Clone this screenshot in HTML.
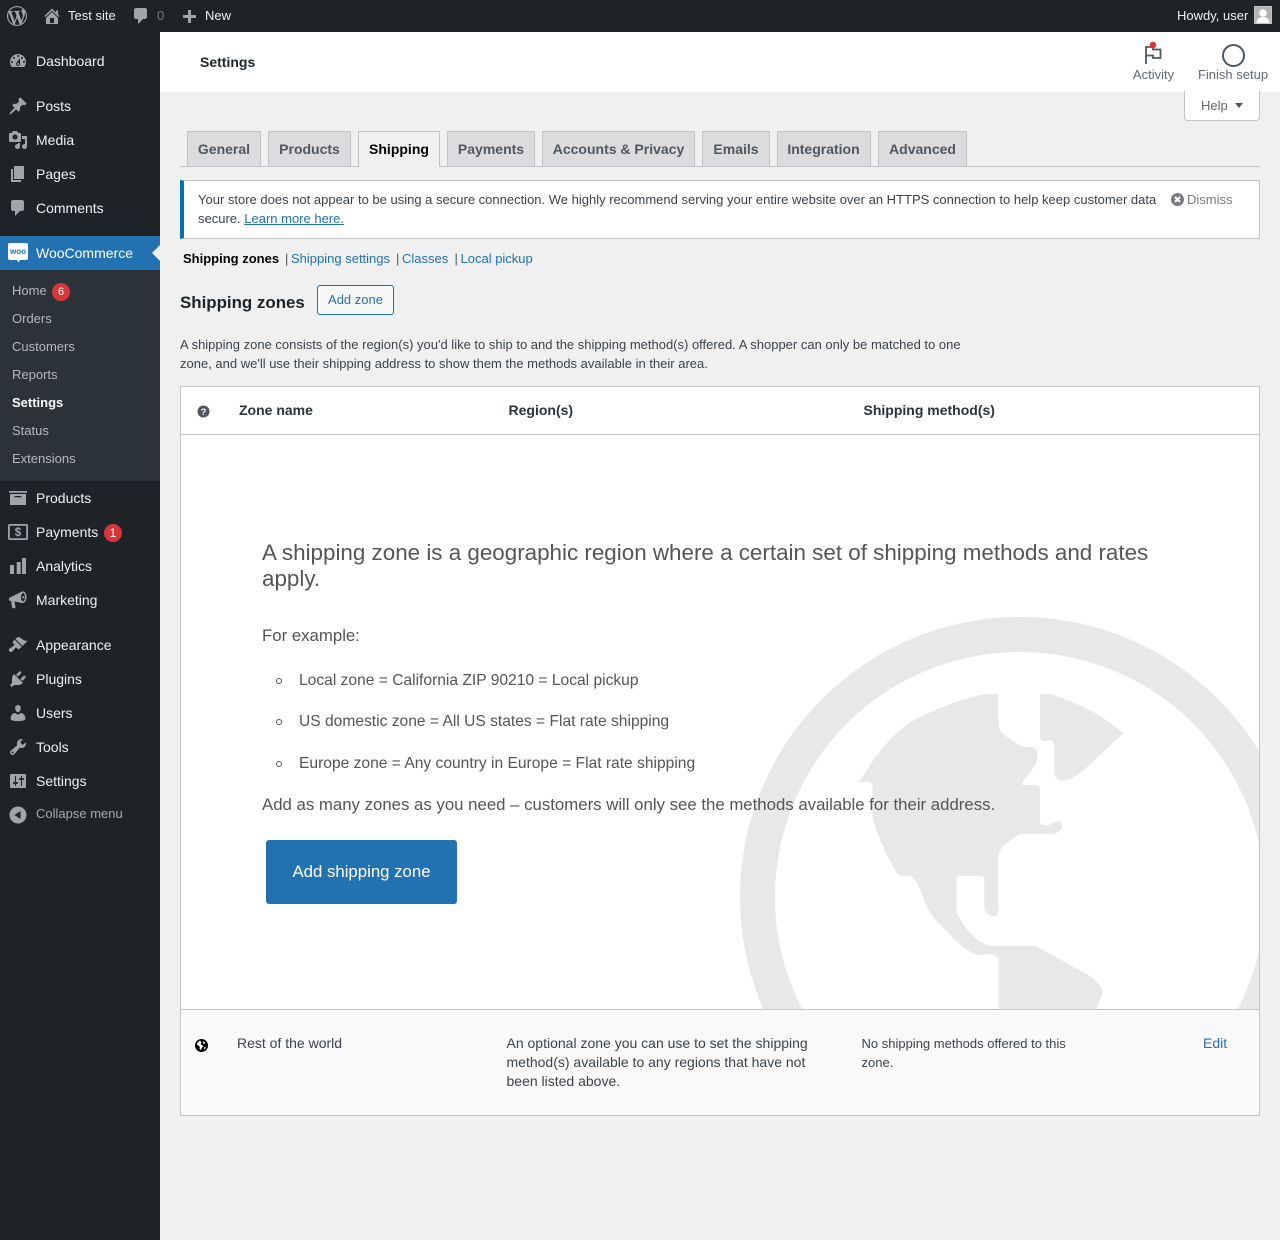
<!DOCTYPE html>
<html lang="en"><head><meta charset="utf-8"><title>Shipping settings</title>
<style>
html,body{margin:0;padding:0}
body{width:1280px;height:1240px;position:relative;overflow:hidden;background:#f0f0f1;font-family:"Liberation Sans",sans-serif;font-size:13px;color:#3c434a}
.a,.t,svg.i{position:absolute}
.t{white-space:nowrap;line-height:20px}
a{color:#2271b1;text-decoration:none}
.m{left:36px;font-size:14px;color:#f0f0f1}
.s{left:12px;font-size:13px;color:#b4b9be}
svg.i{width:20px;height:20px;fill:#a0a5aa;left:8px}
.tab{position:absolute;top:131px;height:34px;box-sizing:content-box;background:#dcdcde;border:1px solid #c3c4c7;border-bottom:0;font-size:14px;font-weight:bold;line-height:35px;color:#50575e;text-align:center}
.badge{position:absolute;width:18px;height:18px;border-radius:50%;background:#d63638;color:#fff;font-size:11px;line-height:18px;text-align:center}
.b{font-size:15.6px;color:#555}
</style></head><body>

<div class="a" style="left:0;top:0;width:1280px;height:32px;background:#1d2327"></div>
<div class="a" style="left:0;top:32px;width:160px;height:1208px;background:#1d2327"></div>

<svg class="i" style="left:7px;top:6px" viewBox="0 0 20 20"><path d="M20 10c0-5.51-4.49-10-10-10C4.48 0 0 4.49 0 10c0 5.52 4.48 10 10 10 5.51 0 10-4.48 10-10zM7.78 15.37L4.37 6.22c.55-.02 1.17-.08 1.17-.08.5-.06.44-1.13-.06-1.11 0 0-1.45.11-2.37.11-.18 0-.37 0-.58-.01C4.12 2.69 6.87 1.11 10 1.11c2.33 0 4.45.87 6.05 2.34-.68-.11-1.65.39-1.65 1.58 0 .74.45 1.36.9 2.1.35.61.55 1.36.55 2.46 0 1.49-1.4 5-1.4 5l-3.03-8.37c.54-.02.82-.17.82-.17.5-.05.44-1.25-.06-1.22 0 0-1.44.12-2.38.12-.87 0-2.33-.12-2.33-.12-.5-.03-.56 1.2-.06 1.22l.92.08 1.26 3.41zM17.41 10c.24-.64.74-1.87.43-4.25.7 1.29 1.05 2.71 1.05 4.25 0 3.29-1.73 6.24-4.4 7.78.97-2.59 1.94-5.2 2.92-7.78zM6.1 18.09C3.12 16.65 1.11 13.53 1.11 10c0-1.3.23-2.48.72-3.59C3.25 10.3 4.67 14.2 6.1 18.09zm4.03-6.63l2.58 6.98c-.86.29-1.76.45-2.71.45-.79 0-1.57-.11-2.29-.33.81-2.38 1.62-4.74 2.42-7.1z"/></svg>
<svg class="i" style="left:42px;top:6px" viewBox="0 0 20 20"><path d="M16 8.5l1.53 1.53-1.06 1.06L10 4.62l-6.47 6.47-1.06-1.06L10 2.5l4 4v-2h2v4zm-6-2.46l6 5.99V18H4v-5.97zM12 17v-5H8v5h4z"/></svg>
<div class="t" style="left:68px;top:6px;color:#f0f0f1">Test site</div>
<svg class="i" style="left:131px;top:6px" viewBox="0 0 20 20"><path d="M5 2h9c1.1 0 2 .9 2 2v7c0 1.1-.9 2-2 2h-2l-5 5v-5H5c-1.1 0-2-.9-2-2V4c0-1.1.9-2 2-2z"/></svg>
<div class="t" style="left:157px;top:6px;color:#787c82">0</div>
<svg class="i" style="left:179px;top:7px" viewBox="0 0 20 20"><path d="M17 8H12V3H9V8H4V11H9V16H12V11H17Z"/></svg>
<div class="t" style="left:205px;top:6px;color:#f0f0f1">New</div>
<div class="t" style="left:1177px;top:6px;color:#f0f0f1">Howdy, user</div>
<svg class="a" style="left:1254px;top:6px" width="18" height="18" viewBox="0 0 18 18"><rect width="18" height="18" fill="#c3c4c7"/><rect x="1" y="1" width="16" height="16" fill="#b4b4b4"/><circle cx="9" cy="7" r="3.800" fill="#fff"/><path d="M2.500 17c0-4 3-6 6.500-6s6.500 2 6.500 6z" fill="#fff"/></svg>

<svg class="i" style="top:51px" viewBox="0 0 20 20"><path d="M3.760 16h12.480c1.100-1.370 1.760-3.110 1.760-5 0-4.420-3.580-8-8-8s-8 3.580-8 8c0 1.890.66 3.630 1.760 5zM10 4c.55 0 1 .45 1 1s-.45 1-1 1-1-.45-1-1 .45-1 1-1zM6 6c.55 0 1 .45 1 1s-.45 1-1 1-1-.45-1-1 .45-1 1-1zm8 0c.55 0 1 .45 1 1s-.45 1-1 1-1-.45-1-1 .45-1 1-1zm-5.370 5.550L12 7v6c0 1.100-.9 2-2 2s-2-.9-2-2c0-.57.24-1.080.63-1.450zM4 10c.55 0 1 .45 1 1s-.45 1-1 1-1-.45-1-1 .45-1 1-1zm12 0c.55 0 1 .45 1 1s-.45 1-1 1-1-.45-1-1 .45-1 1-1zm-5 3c0-.55-.45-1-1-1s-1 .45-1 1 .45 1 1 1 1-.45 1-1z"/></svg>
<div class="t m" style="top:51px">Dashboard</div>
<svg class="i" style="top:96px" viewBox="0 0 20 20"><path d="M10.440 3.020l1.820-1.820 6.360 6.350-1.830 1.820c-1.050-.68-2.480-.57-3.410.36l-.75.75c-.92.93-1.040 2.350-.35 3.410l-1.830 1.820-2.410-2.410-2.800 2.790c-.42.42-3.380 2.710-3.800 2.290s1.860-3.390 2.280-3.810l2.790-2.790L4.100 9.360l1.830-1.820c1.050.69 2.480.57 3.400-.36l.75-.75c.93-.92 1.050-2.350.36-3.410z"/></svg>
<div class="t m" style="top:96px">Posts</div>
<svg class="i" style="top:130px" viewBox="0 0 20 20"><path d="M13 11V4c0-.55-.45-1-1-1h-1.670L9 1H5L3.670 3H2c-.55 0-1 .45-1 1v7c0 .55.45 1 1 1h10c.55 0 1-.45 1-1zM7 4.500c1.380 0 2.500 1.120 2.500 2.500S8.380 9.500 7 9.500 4.500 8.380 4.500 7 5.620 4.500 7 4.500zM14 6h5v10.500c0 1.380-1.120 2.500-2.500 2.500S14 17.880 14 16.500s1.120-2.500 2.500-2.500c.17 0 .34.02.5.05V9h-3V6zm-4 8.050V13h2v3.500c0 1.380-1.120 2.500-2.500 2.500S7 17.880 7 16.500 8.120 14 9.500 14c.17 0 .34.02.5.05z"/></svg>
<div class="t m" style="top:130px">Media</div>
<svg class="i" style="top:164px" viewBox="0 0 20 20"><path d="M6 15V2h10v13H6zm-1 1h8v2H3V5h2v11z"/></svg>
<div class="t m" style="top:164px">Pages</div>
<svg class="i" style="top:198px" viewBox="0 0 20 20"><path d="M5 2h9c1.100 0 2 .9 2 2v7c0 1.100-.9 2-2 2h-2l-5 5v-5H5c-1.100 0-2-.9-2-2V4c0-1.100.9-2 2-2z"/></svg>
<div class="t m" style="top:198px">Comments</div>

<div class="a" style="left:0;top:236px;width:160px;height:34px;background:#2271b1"></div>
<div class="a" style="left:152px;top:245px;width:0;height:0;border:8px solid transparent;border-left:0;border-right-color:#f0f0f1"></div>
<svg class="a" style="left:8px;top:243px" width="20" height="20" viewBox="0 0 20 20"><path d="M2 0h16a2 2 0 0 1 2 2v13a2 2 0 0 1-2 2h-6l-1.500 2.500-1.500-2.500H2a2 2 0 0 1-2-2V2a2 2 0 0 1 2-2z" fill="#fff"/><text x="10" y="11" text-anchor="middle" font-family="Liberation Sans,sans-serif" font-size="8" font-weight="bold" fill="#2271b1">woo</text></svg>
<div class="t m" style="top:243px;color:#fff">WooCommerce</div>

<div class="a" style="left:0;top:270px;width:160px;height:211px;background:#2c3338"></div>
<div class="t s" style="top:281px">Home</div>
<div class="badge" style="left:52px;top:283px">6</div>
<div class="t s" style="top:309px">Orders</div>
<div class="t s" style="top:337px">Customers</div>
<div class="t s" style="top:365px">Reports</div>
<div class="t s" style="top:393px;color:#fff;font-weight:bold">Settings</div>
<div class="t s" style="top:421px">Status</div>
<div class="t s" style="top:449px">Extensions</div>

<svg class="i" style="top:488px" viewBox="0 0 20 20"><path d="M1 3h18v1.800H1zM2 6h16v11H2zm4.500 2v1.300h7V8z" fill-rule="evenodd"/></svg>
<div class="t m" style="top:488px">Products</div>
<svg class="i" style="top:522px" viewBox="0 0 20 20"><rect x="0.900" y="2.900" width="18.200" height="14.200" rx="1" fill="none" stroke="#a0a5aa" stroke-width="1.800"/><text x="10" y="14.200" text-anchor="middle" font-family="Liberation Sans,sans-serif" font-size="11.500" font-weight="bold" fill="#a0a5aa">$</text></svg>
<div class="t m" style="top:522px">Payments</div>
<div class="badge" style="left:104px;top:524px;font-size:12px">1</div>
<svg class="i" style="top:556px" viewBox="0 0 20 20"><path d="M2 9h4v9H2zM8.700 6h4v12h-4zM14 2h4v16h-4z"/></svg>
<div class="t m" style="top:556px">Analytics</div>
<svg class="i" style="top:590px" viewBox="0 0 20 20"><path d="M1 8L14 1.500C16.500 1 18.500 3.500 18.500 7S16.500 13.500 14 13L6.500 11.500 7.500 17Q7.500 18.300 6.300 18.300H5.300Q4.300 18.300 4 17L3 11 1 10.500z"/><ellipse cx="15" cy="7.200" rx="2" ry="4.200" fill="#1d2327"/><circle cx="15.300" cy="7.200" r="1.100" fill="#a0a5aa"/></svg>
<div class="t m" style="top:590px">Marketing</div>

<svg class="i" style="top:635px" viewBox="0 0 20 20"><path d="M14.480 11.060L7.410 3.990l1.500-1.500c.5-.56 2.300-.47 3.510.32 1.210.8 1.430 1.280 2.910 2.100 1.180.64 2.450 1.260 4.450.85zm-.71.71L6.700 4.700 4.930 6.470c-.39.39-.39 1.020 0 1.410l1.060 1.060c.39.39.39 1.030 0 1.420-.6.6-1.430 1.110-2.210 1.690-.35.26-.7.53-1.010.84C1.430 13.230.4 14.670 1.020 15.900c.02.02.35.35.37.37.95.95 2.370.93 3.420-.12.31-.31.58-.66.84-1.010.58-.78 1.090-1.610 1.690-2.210.39-.39 1.020-.39 1.410 0l1.060 1.060c.39.39 1.020.39 1.410 0z"/></svg>
<div class="t m" style="top:635px">Appearance</div>
<svg class="i" style="top:669px" viewBox="0 0 20 20"><path d="M13.110 4.360L9.870 7.600 8 5.730l3.240-3.240c.35-.34 1.050-.2 1.560.32.52.51.66 1.210.31 1.550zm-8 1.770l.91-1.120 9.010 9.010-1.190.84c-.71.71-2.630 1.160-3.820 1.160H6.140L4.900 17.260c-.59.59-1.540.59-2.120 0-.59-.58-.59-1.530 0-2.120l1.240-1.240v-3.880c0-1.130.4-3.190 1.090-3.890zm7.260 3.970l3.240-3.240c.34-.35 1.040-.21 1.550.31.52.51.66 1.210.31 1.550l-3.240 3.250z"/></svg>
<div class="t m" style="top:669px">Plugins</div>
<svg class="i" style="top:703px" viewBox="0 0 20 20"><path d="M10 9.250c-2.270 0-2.730-3.440-2.730-3.440C7 4.020 7.820 2 9.970 2c2.160 0 2.980 2.020 2.710 3.810 0 0-.41 3.440-2.680 3.440zm0 2.570L12.720 10c2.390 0 4.520 2.330 4.520 4.530v2.490s-3.650 1.130-7.240 1.130c-3.650 0-7.240-1.130-7.240-1.130v-2.490c0-2.250 1.940-4.480 4.470-4.480z"/></svg>
<div class="t m" style="top:703px">Users</div>
<svg class="i" style="top:737px" viewBox="0 0 20 20"><path d="M16.680 9.770c-1.340 1.340-3.300 1.670-4.950.99l-5.410 6.520c-.99.99-2.590.99-3.580 0s-.99-2.590 0-3.570l6.520-5.420c-.68-1.650-.35-3.610.99-4.950 1.280-1.280 3.120-1.620 4.720-1.060l-2.890 2.890 2.820 2.820 2.860-2.870c.53 1.580.18 3.390-1.080 4.650zM3.810 16.210c.4.39 1.040.39 1.430 0 .4-.4.4-1.040 0-1.430-.39-.4-1.030-.4-1.430 0-.39.39-.39 1.030 0 1.430z"/></svg>
<div class="t m" style="top:737px">Tools</div>
<svg class="i" style="top:771px" viewBox="0 0 20 20"><path d="M18 16V4c0-.55-.45-1-1-1H3c-.55 0-1 .45-1 1v12c0 .55.45 1 1 1h14c.55 0 1-.45 1-1zM8 11h1c.55 0 1 .45 1 1s-.45 1-1 1H8v1.500c0 .28-.22.5-.5.5s-.5-.22-.5-.5V13H6c-.55 0-1-.45-1-1s.45-1 1-1h1V5.500c0-.28.22-.5.5-.5s.5.22.5.5V11zm5-2h-1c-.55 0-1-.45-1-1s.45-1 1-1h1V5.500c0-.28.22-.5.5-.5s.5.22.5.5V7h1c.55 0 1 .45 1 1s-.45 1-1 1h-1v5.500c0 .28-.22.5-.5.5s-.5-.22-.5-.5V9z"/></svg>
<div class="t m" style="top:771px">Settings</div>
<svg class="i" style="top:805px" viewBox="0 0 20 20"><path d="M10 1.500a8.500 8.500 0 1 1 0 17 8.500 8.500 0 0 1 0-17zM12.500 14V6l-6 4z" fill-rule="evenodd"/></svg>
<div class="t" style="left:36px;top:804px;color:#a7aaad">Collapse menu</div>

<div class="a" style="left:160px;top:32px;width:1120px;height:60px;background:#fff"></div>
<div class="t" style="left:200px;top:52px;font-size:14px;font-weight:bold;color:#1d2327">Settings</div>
<svg class="a" style="left:1143px;top:40px" width="20" height="26" viewBox="0 0 20 26"><path d="M3 24V7H10V9.500H17.500V18H10V15.500H3" fill="none" stroke="#50575e" stroke-width="1.800"/><circle cx="10" cy="5" r="3.300" fill="#d63638"/></svg>
<div class="t" style="left:1113.500px;width:80px;text-align:center;top:65px;color:#646970">Activity</div>
<div class="a" style="left:1221.500px;top:43.500px;width:19px;height:19px;border:2px solid #50575e;border-radius:50%"></div>
<div class="t" style="left:1183px;width:100px;text-align:center;top:65px;color:#646970">Finish setup</div>
<div class="a" style="left:1184px;top:91px;width:74px;height:29px;background:#fff;border:1px solid #c3c4c7;border-top:0;border-radius:0 0 4px 4px"></div>
<div class="t" style="left:1201px;top:96px;color:#646970">Help</div>
<div class="a" style="left:1235px;top:103px;width:0;height:0;border:4.500px solid transparent;border-top:5.500px solid #50575e;border-bottom:0"></div>

<div class="a" style="left:180px;top:166px;width:1080px;height:1px;background:#c3c4c7"></div>
<div class="tab" style="left:187px;width:72px">General</div>
<div class="tab" style="left:268px;width:81px">Products</div>
<div class="tab" style="left:358px;width:80px;height:35px;background:#f0f0f1;color:#000">Shipping</div>
<div class="tab" style="left:447px;width:86px">Payments</div>
<div class="tab" style="left:542px;width:151px">Accounts &amp; Privacy</div>
<div class="tab" style="left:702px;width:66px">Emails</div>
<div class="tab" style="left:777px;width:92px;text-indent:-1px">Integration</div>
<div class="tab" style="left:878px;width:87px">Advanced</div>

<div class="a" style="left:180px;top:180px;width:1075px;height:57px;background:#fff;border:1px solid #c3c4c7;border-left:4px solid #0071b1"></div>
<div class="t" style="left:198px;top:190px;line-height:19px">Your store does not appear to be using a secure connection. We highly recommend serving your entire website over an HTTPS connection to help keep customer data<br>secure. <a href="#" style="text-decoration:underline">Learn more here.</a></div>
<svg class="a" style="left:1171px;top:193px" width="13" height="13" viewBox="0 0 13 13"><circle cx="6.500" cy="6.500" r="6.500" fill="#787c82"/><path d="M4 4l5 5M9 4l-5 5" stroke="#fff" stroke-width="2"/></svg>
<div class="t" style="left:1187px;top:190px;color:#787c82">Dismiss</div>

<div class="t" style="left:183px;top:249px;font-weight:bold;color:#000">Shipping zones</div>
<div class="t" style="left:285px;top:249px;color:#50575e">|</div>
<div class="t" style="left:291px;top:249px"><a href="#">Shipping settings</a></div>
<div class="t" style="left:396px;top:249px;color:#50575e">|</div>
<div class="t" style="left:402px;top:249px"><a href="#">Classes</a></div>
<div class="t" style="left:454.500px;top:249px;color:#50575e">|</div>
<div class="t" style="left:460.500px;top:249px"><a href="#">Local pickup</a></div>

<div class="t" style="left:180px;top:293px;font-size:16.900px;font-weight:bold;color:#1d2327">Shipping zones</div>
<div class="a" style="left:317px;top:285px;width:75px;height:28px;border:1px solid #2271b1;border-radius:3px;background:#f6f7f7;color:#2271b1;text-align:center;line-height:27px">Add zone</div>

<div class="t" style="left:180px;top:335px;line-height:19px">A shipping zone consists of the region(s) you'd like to ship to and the shipping method(s) offered. A shopper can only be matched to one<br>zone, and we'll use their shipping address to show them the methods available in their area.</div>

<div class="a" style="left:180px;top:386px;width:1078px;height:728px;background:#fff;border:1px solid #c3c4c7;overflow:hidden">
<svg class="a" style="left:-181px;top:-387px" width="1280" height="1240" viewBox="0 0 1280 1240"><circle cx="1020" cy="897" r="262.500" fill="none" stroke="#e8e8e8" stroke-width="35"/><path fill="#e8e8e8" d="M998.600 694H984.300C958 700 930 711 909.300 723C890 736 872 760 858.600 783C862 782 866 781 869 782Q872.500 783 872.500 786V816.700C876 832 884 850 891.400 863C895 871 897 875.700 902 875.700H911C916 880 919 886 921.800 893C925 903 927 908 930.700 913C936 921 942 927 948.600 933C957 943 967 951 977 955C984 956 991 952 996 956Q998.600 958 998.600 962V1009H1096.800C1098 1003 1102 998 1102 993C1103 987 1097 982 1091.400 976.700L1036 946H993C985 946 977 940 970 933C965 927 960 920 956.400 911.700V880Q956.400 876 959.300 876H980.700Q984.300 876 984.300 880V908C984.300 912 989 915 993 916Q995 917 996.800 915Q998 912 998.600 906.700V855C1000 850 1002 847 1004 845L1019.300 834H1052C1058 833 1062 831 1062 826.700C1062 822 1059 820 1057.500 820.700C1053 822 1050 825.300 1046.800 825.300C1043 825.500 1040 825 1040 821.700V791.700Q1040 785.300 1036 785.300L1024 785Q1021 785 1022 783C1027 775 1034 768 1036 763C1037.500 757 1037.500 754 1037 751.700Q1036 747.300 1032.500 747.300L1024 746.700Q1021 746.700 1019 745L1004 735Q998.600 730 998.600 725z"/><path fill="#e8e8e8" d="M1040 694H1050.400C1066 699 1082 706 1095 713C1105 719 1115 726 1123.600 733L1091.400 763C1082 772 1071 780.700 1062.900 780.700C1058 780.700 1054.300 777 1054.300 773V746.700C1053.500 743 1052 740 1050.400 740C1048 740 1047 741.500 1044 741.300Q1040 740 1040 736.700z"/></svg>
</div>
<div class="a" style="left:181px;top:434px;width:1078px;height:1px;background:#c3c4c7"></div>
<svg class="a" style="left:197px;top:405px" width="13" height="13" viewBox="0 0 13 13"><circle cx="6.500" cy="6.500" r="6" fill="#50575e"/><text x="6.500" y="9.800" text-anchor="middle" font-family="Liberation Sans,sans-serif" font-size="9.500" font-weight="bold" fill="#fff">?</text></svg>
<div class="t" style="left:239px;top:400px;font-size:14px;font-weight:bold;color:#2c3338">Zone name</div>
<div class="t" style="left:508.500px;top:400px;font-size:14px;font-weight:bold;color:#2c3338">Region(s)</div>
<div class="t" style="left:863.500px;top:400px;font-size:14px;font-weight:bold;color:#2c3338">Shipping method(s)</div>

<div class="t" style="left:262px;top:540px;font-size:22.400px;line-height:26px;color:#555">A shipping zone is a geographic region where a certain set of shipping methods and rates<br>apply.</div>
<div class="t b" style="left:262px;top:626px;font-size:16.800px">For example:</div>
<div class="a" style="left:276px;top:678px;width:4px;height:4px;border:1px solid #555;border-radius:50%"></div>
<div class="t b" style="left:299px;top:671px">Local zone = California ZIP 90210 = Local pickup</div>
<div class="a" style="left:276px;top:719px;width:4px;height:4px;border:1px solid #555;border-radius:50%"></div>
<div class="t b" style="left:299px;top:712px">US domestic zone = All US states = Flat rate shipping</div>
<div class="a" style="left:276px;top:761px;width:4px;height:4px;border:1px solid #555;border-radius:50%"></div>
<div class="t b" style="left:299px;top:754px">Europe zone = Any country in Europe = Flat rate shipping</div>
<div class="t b" style="left:262px;top:795px;font-size:16.800px">Add as many zones as you need – customers will only see the methods available for their address.</div>
<div class="a" style="left:266px;top:840px;width:191px;height:64px;background:#2271b1;border-radius:3px;color:#fff;font-size:16.800px;line-height:63px;text-align:center">Add shipping zone</div>

<div class="a" style="left:181px;top:1009px;width:1078px;height:106px;background:#f9f9f9;border-top:1px solid #c3c4c7;box-sizing:border-box"></div>
<svg class="a" style="left:195px;top:1039px" width="13" height="13" viewBox="0 0 13 13"><circle cx="6.500" cy="6.500" r="6.500" fill="#000"/><path d="M5 1.500C3.500 2.500 2 4 1.800 5.500L3.500 6.500 5 8 4.500 10l1.500 1 1-2.500 1.500-1L7 6 5.500 5 6.500 3.500zM8 2l2.500 1.800L8.500 5.500zM9 8.500l2-.5-1.500 3z" fill="#fff"/></svg>
<div class="t" style="left:237px;top:1033px;font-size:14px;color:#3c434a">Rest of the world</div>
<div class="t" style="left:506.500px;top:1034px;font-size:14px;line-height:19px;color:#3c434a">An optional zone you can use to set the shipping<br>method(s) available to any regions that have not<br>been listed above.</div>
<div class="t" style="left:861.500px;top:1034px;line-height:19px;color:#3c434a">No shipping methods offered to this<br>zone.</div>
<div class="t" style="left:1203px;top:1033px;font-size:14px"><a href="#">Edit</a></div>
</body></html>
